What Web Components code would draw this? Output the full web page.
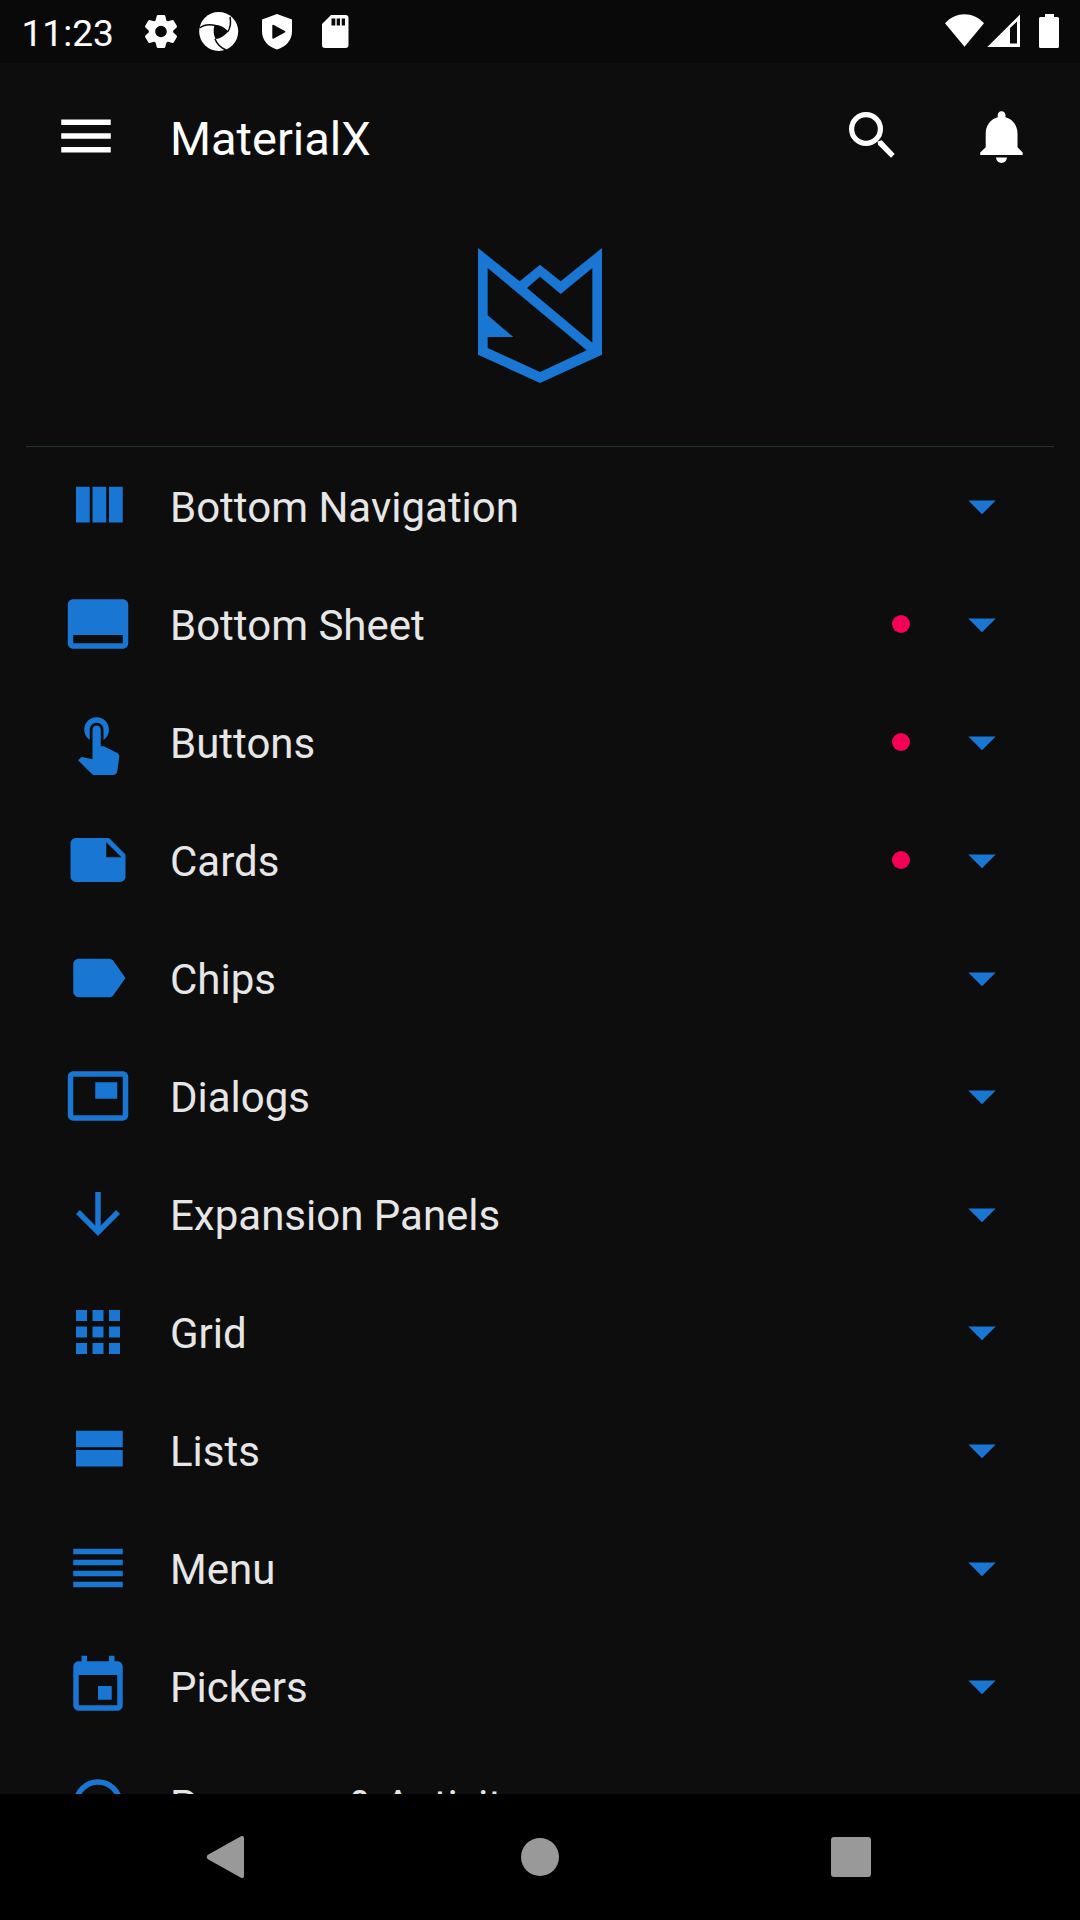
<!DOCTYPE html>
<html lang="en">
<head>
<meta charset="utf-8">
<title>MaterialX</title>
<style>
html,body{margin:0;padding:0;background:#000}
body{font-family:Roboto,"Liberation Sans",sans-serif;width:1080px;height:1920px;overflow:hidden}
</style>
</head>
<body>
<phone-screen>
  <status-bar slot="top" time="11:23"></status-bar>
  <app-toolbar heading="MaterialX"></app-toolbar>
  <brand-header></brand-header>
  <menu-item icon="column">Bottom Navigation</menu-item>
  <menu-item icon="sheet" badge>Bottom Sheet</menu-item>
  <menu-item icon="touch" badge>Buttons</menu-item>
  <menu-item icon="note" badge>Cards</menu-item>
  <menu-item icon="label">Chips</menu-item>
  <menu-item icon="dialog">Dialogs</menu-item>
  <menu-item icon="down">Expansion Panels</menu-item>
  <menu-item icon="apps">Grid</menu-item>
  <menu-item icon="stream">Lists</menu-item>
  <menu-item icon="lines">Menu</menu-item>
  <menu-item icon="event">Pickers</menu-item>
  <menu-item icon="ring">Progress &amp; Activity</menu-item>
  <nav-bar slot="bottom"></nav-bar>
</phone-screen>
<script>
const define = (name, render) => customElements.define(name, class extends HTMLElement {
  constructor() {
    super();
    this.attachShadow({mode: 'open'}).innerHTML = render(this);
  }
});

const ICONS = {
  column: '<path d="M10 18h5V5h-5v13zm-6 0h5V5H4v13zM16 5v13h5V5h-5z"/>',
  sheet: '<path d="M21 3H3c-1.1 0-2 .9-2 2v14c0 1.1.9 2 2 2h18c1.1 0 2-.9 2-2V5c0-1.1-.9-2-2-2zm0 16H3v-3h18v3z"/>',
  touch: '<path d="M9 11.24V7.5C9 6.12 10.12 5 11.5 5S14 6.12 14 7.5v3.74c1.21-.81 2-2.18 2-3.74C16 5.01 13.99 3 11.5 3S7 5.01 7 7.5c0 1.56.79 2.93 2 3.74zm9.84 4.63l-4.54-2.26c-.17-.07-.35-.11-.54-.11H13v-6c0-.83-.67-1.5-1.5-1.5S10 6.67 10 7.5v10.74l-3.43-.72c-.08-.01-.15-.03-.24-.03-.31 0-.59.13-.79.33l-.79.8 4.94 4.94c.27.27.65.44 1.06.44h6.79c.75 0 1.33-.55 1.44-1.28l.75-5.27c.01-.07.02-.14.02-.2 0-.62-.38-1.16-.91-1.38z"/>',
  note: '<path d="M22 10l-6-6H4c-1.1 0-2 .9-2 2v12.01c0 1.1.9 1.99 2 1.99l16-.01c1.1 0 2-.89 2-1.99v-8zm-7-4.5l5.5 5.5H15V5.5z"/>',
  label: '<path d="M17.63 5.84C17.27 5.33 16.67 5 16 5L5 5.01C3.9 5.01 3 5.9 3 7v10c0 1.1.9 1.99 2 1.99L16 19c.67 0 1.27-.33 1.63-.84L22 12l-4.37-6.16z"/>',
  dialog: '<path d="M19 7h-8v6h8V7zm2-4H3c-1.1 0-2 .9-2 2v14c0 1.1.9 1.98 2 1.98h18c1.1 0 2-.88 2-1.98V5c0-1.1-.9-2-2-2zm0 16.01H3V4.98h18v14.03z"/>',
  down: '<path d="M20 12l-1.41-1.41L13 16.17V4h-2v12.17l-5.58-5.59L4 12l8 8 8-8z"/>',
  apps: '<path d="M4 8h4V4H4v4zm6 12h4v-4h-4v4zm-6 0h4v-4H4v4zm0-6h4v-4H4v4zm6 0h4v-4h-4v4zm6-10v4h4V4h-4zm-6 4h4V4h-4v4zm6 6h4v-4h-4v4zm0 6h4v-4h-4v4z"/>',
  stream: '<path d="M4 18h17v-6H4v6zM4 5v6h17V5H4z"/>',
  lines: '<path d="M3 15h18v-2H3v2zm0 4h18v-2H3v2zm0-8h18V9H3v2zm0-6v2h18V5H3z"/>',
  event: '<path d="M17 12h-5v5h5v-5zM16 1v2H8V1H6v2H5c-1.11 0-1.99.9-1.99 2L3 19c0 1.1.89 2 2 2h14c1.1 0 2-.9 2-2V5c0-1.1-.9-2-2-2h-1V1h-2zm3 18H5V8h14v11z"/>',
  ring: '<circle cx="12" cy="12" r="8" fill="none" stroke="currentColor" stroke-width="2"/>',
  caret: '<path d="M7 10l5 5 5-5z"/>'
};
const icon = n => `<svg width="66" height="66" viewBox="0 0 24 24" fill="currentColor">${ICONS[n]}</svg>`;

define('phone-screen', () => `<style>
:host{display:flex;flex-direction:column;width:1080px;height:1920px;background:#0d0d0d}
main{flex:1;min-height:0;overflow:hidden;display:flex;flex-direction:column}
</style><slot name="top"></slot><main><slot></slot></main><slot name="bottom"></slot>`);

define('status-bar', el => `<style>
:host{display:flex;height:63px;background:#090909;color:#fff;justify-content:space-between}
.time{padding:0 0 0 21.5px;width:118.5px;font-size:37.1px;line-height:67px}
.left{display:flex;height:63px}svg{display:block}
</style>
<div class="left"><span class="time">${el.getAttribute('time')}</span>
<svg width="220" height="63" viewBox="140 0 220 63" fill="#fff">
<g transform="translate(161 31.5)">
<circle r="9" fill="none" stroke="#fff" stroke-width="6.400"/>
<g id="pair"><path d="M-5.500-10.500L-4.300-15.500Q-4-16.500-3-16.500H3Q4-16.500 4.300-15.500L5.500-10.500zM-5.500 10.500L-4.300 15.500Q-4 16.500-3 16.500H3Q4 16.500 4.300 15.500L5.500 10.500z"/></g>
<use href="#pair" transform="rotate(60)"/><use href="#pair" transform="rotate(120)"/>
</g>
<circle cx="218.700" cy="31.500" r="19.500"/>
<path fill="#090909" d="M214.500 25c5-.5 10 2 13.500 6.500-3 4-7.500 7-12.500 7.500-2-4-2.500-9-1-14z"/>
<path fill="none" stroke="#090909" stroke-width="1.500" d="M199.500 28c4-3 10-4 16-2.500M227.500 32c3-4 3.500-10 2.500-15M215 39c2 5 5 8.500 11 11"/>
<path d="M277 14l15 5.500v12c0 8.500-6 15.500-15 18-9-2.500-15-9.500-15-18v-12z"/>
<path fill="#090909" d="M272.300 26q0-1.800 1.500-1l11 6q1.400.7 0 1.500l-11 6q-1.500.8-1.500-1z"/>
<path fill-rule="evenodd" d="M331 15h14.500a3 3 0 0 1 3 3v27a3 3 0 0 1-3 3h-20.500a3 3 0 0 1-3-3v-21zM331.500 18.500v7h3.800v-7zm5.200 0v7h3.300v-7zm5 0v7h3.300v-7z"/>
</svg></div>
<svg width="140" height="63" viewBox="940 0 140 63" fill="#fff">
<path d="M964.500 46.700L945 23.300c11-12 28-12 39 0z"/>
<path fill-rule="evenodd" d="M987.300 47L1020 14.500V47zM1010 28v15.500h7V21.500z"/>
<path d="M1045 14h9v3h3.500q1.500 0 1.500 1.500v28q0 1.500-1.500 1.500h-17q-1.500 0-1.500-1.500v-28q0-1.500 1.500-1.500h4.500z"/>
</svg>`);

define('app-toolbar', el => `<style>
:host{display:flex;height:147px;flex:none;align-items:center;color:#fff}
.menu{padding:0 0 2px 53px;width:117px}h1{margin:0;flex:1;font-weight:400;font-size:47px;line-height:56px;padding-top:5px}
svg{display:block}
</style><div class="menu"><svg width="66" height="66" viewBox="0 0 24 24" fill="#fff"><path d="M3 18h18v-2H3v2zm0-5h18v-2H3v2zm0-7v2h18V6H3z"/></svg></div>
<h1>${el.getAttribute('heading')}</h1>
<svg width="240" height="147" viewBox="840 63 240 147" fill="#fff">
<circle cx="866" cy="129" r="14.400" fill="none" stroke="#fff" stroke-width="5.200"/>
<path d="M877.700 141.500l4-1.300 13 13.700-3.700 3.800-13-13z"/>
<path d="M1001.500 111.300c2.500 0 4 1.700 4 4.200v1.800c7.500 2 12 8.500 12 16.500v13.500l5.200 5.200v2.500h-42.500v-2.500l5.500-5.200v-13.500c0-8 4.500-14.500 12-16.500v-1.800c0-2.500 1.500-4.200 3.800-4.200zM996 157.500h11c-.4 3.300-2.500 5.400-5.500 5.400s-5.100-2.100-5.500-5.400z"/>
</svg>`);

define('brand-header', () => `<style>
:host{display:flex;flex:none;flex-direction:column;align-items:center;height:237px;padding:38px 26px 0;box-sizing:border-box;border:0}
svg{display:block;flex:none}hr{flex:none;width:1028px;height:1px;border:0;margin:63px 0 0;background:#263238}
</style><svg width="124" height="135" viewBox="84 54 372 405"><path fill="#1976d2" fill-rule="evenodd" d="M84 54L209 154L270 104L332 154L456 54V374L270 459L84 374zM113 114V256L190 321H113V354L270 426L410 361zM231 174L427 338V114L332 192L270 140z"/></svg><hr>`);

define('menu-item', el => `<style>
:host{display:flex;flex:none;height:118px;align-items:center;box-sizing:border-box;padding:0 65px;color:#1976d2}
svg{display:block;flex:none}
.t{flex:1;margin-left:39px;color:#e6e6e6;font-size:42px;line-height:50px;padding-top:3px;white-space:nowrap}
i{width:18px;height:18px;border-radius:50%;background:#f50057;margin-right:39px}
</style>${icon(el.getAttribute('icon'))}<span class="t"><slot></slot></span>${el.hasAttribute('badge') ? '<i></i>' : ''}${icon('caret')}`);

define('nav-bar', () => `<style>
:host{display:flex;flex:none;height:126px;background:#000;align-items:center}
svg{display:block}
</style><svg width="1080" height="126" viewBox="0 1794 1080 126" fill="#999">
<path d="M207.500 1855L241 1836.300q3-1.300 3 1.700v38q0 3-3 1.700L207.500 1859q-1.800-2 0-4z"/>
<circle cx="540" cy="1857" r="19"/><rect x="831" y="1837" width="40" height="40" rx="3"/></svg>`);
</script>
</body>
</html>
